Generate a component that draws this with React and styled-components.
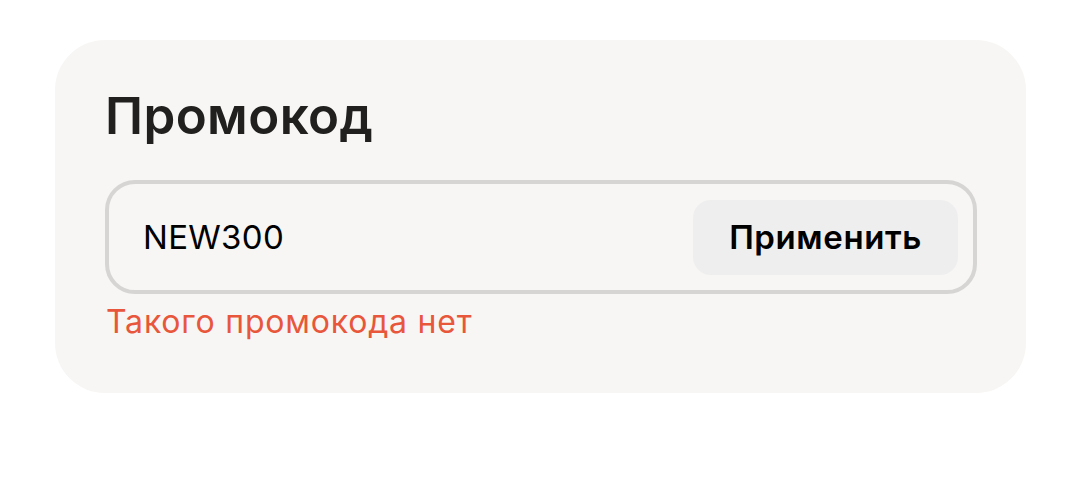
import React from 'react'
import styled, { createGlobalStyle } from 'styled-components'

const Global = createGlobalStyle`
  body {
    margin: 0;
    background: #ffffff;
    font-family: Inter, 'Noto Sans', sans-serif;
  }
`

const Page = styled.div`
  padding: 40px 0 0 55px;
`

const Card = styled.section`
  box-sizing: border-box;
  width: 971px;
  height: 353px;
  padding: 46px 49px 0 50px;
  background: #f7f6f4;
  border-radius: 50px;
`

const Title = styled.h2`
  margin: 0;
  font-size: 51px;
  line-height: 60px;
  font-weight: 600;
  color: #21201f;
  letter-spacing: 0.4px;
`

const Field = styled.div`
  box-sizing: border-box;
  display: flex;
  align-items: center;
  justify-content: space-between;
  height: 114px;
  margin-top: 34px;
  padding: 0 15px 0 34px;
  border: 4px solid #d6d5d3;
  border-radius: 30px;
`

const Code = styled.span`
  font-size: 33px;
  letter-spacing: 0.3px;
  color: #000;
`

const Apply = styled.button`
  height: 75px;
  padding: 0 36px;
  border: none;
  border-radius: 18px;
  background: #efeeee;
  font-family: inherit;
  font-size: 33px;
  font-weight: 600;
  letter-spacing: 0.6px;
  color: #000;
`

const Error = styled.p`
  margin: 8px 0 0 1px;
  font-size: 32px;
  line-height: 40px;
  letter-spacing: 0.8px;
  color: #e8573b;
`

const App = () => {
  return (
    <Page>
      <Global />
      <Card>
        <Title>Промокод</Title>
        <Field>
          <Code>NEW300</Code>
          <Apply>Применить</Apply>
        </Field>
        <Error>Такого промокода нет</Error>
      </Card>
    </Page>
  )
}

export default App
